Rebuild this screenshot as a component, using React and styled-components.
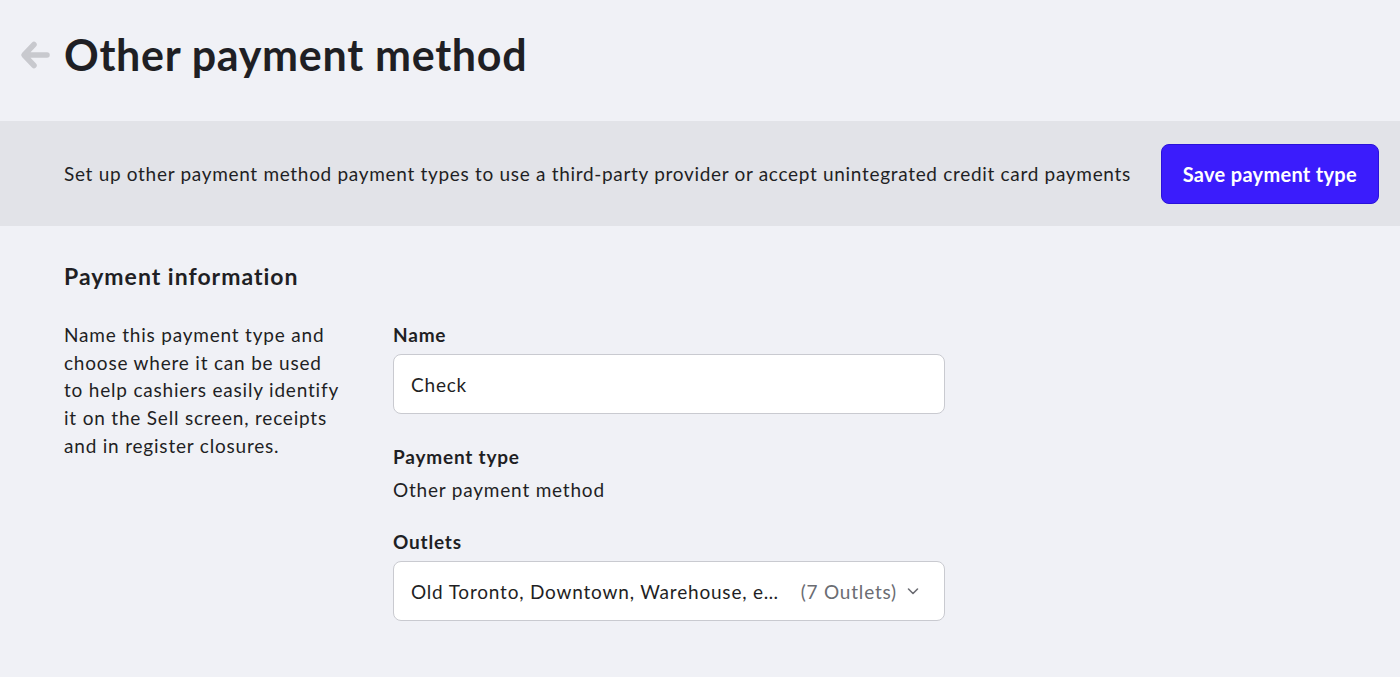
import React from "react";
import styled, { createGlobalStyle } from "styled-components";

const GlobalStyle = createGlobalStyle`
  body {
    margin: 0;
    background-color: #f0f1f6;
    font-family: Lato, "Open Sans", sans-serif;
    color: #1f1f24;
  }
`;

const Page = styled.div`
  width: 1400px;
  min-height: 677px;
  background-color: #f0f1f6;
`;

const Header = styled.div`
  display: flex;
  align-items: center;
  height: 121px;
  padding: 0 0 12px 18px;
  box-sizing: border-box;
`;

const BackButton = styled.button`
  display: flex;
  align-items: center;
  justify-content: center;
  width: 34px;
  height: 40px;
  margin-right: 12px;
  padding: 0;
  border: none;
  background: none;
  color: #c8c9ce;
  cursor: pointer;
`;

const Title = styled.h1`
  margin: 0;
  font-size: 43px;
  font-weight: 700;
  letter-spacing: 0.7px;
  color: #1f1f24;
`;

const Banner = styled.div`
  display: flex;
  align-items: center;
  justify-content: space-between;
  height: 105px;
  padding: 0 21px 0 64px;
  background-color: #e2e3e8;
`;

const BannerText = styled.p`
  margin: 0;
  font-size: 19px;
  letter-spacing: 0.69px;
  color: #1f1f24;
`;

const PrimaryButton = styled.button`
  height: 60px;
  padding: 0 21px;
  border: 1px solid #2a12d9;
  border-radius: 8px;
  background-color: #3b1cfc;
  color: #ffffff;
  font-family: inherit;
  font-size: 20px;
  font-weight: 700;
  letter-spacing: 0.3px;
  cursor: pointer;
`;

const Section = styled.section`
  padding: 36px 64px 0;
`;

const SectionTitle = styled.h2`
  margin: 0 0 31px;
  font-size: 23px;
  font-weight: 700;
  letter-spacing: 1px;
`;

const SectionBody = styled.div`
  display: grid;
  grid-template-columns: 329px 552px;
`;

const Description = styled.p`
  margin: 0;
  width: 280px;
  font-size: 19px;
  letter-spacing: 0.8px;
  line-height: 27.7px;
`;

const Fields = styled.div`
  display: flex;
  flex-direction: column;
`;

const Field = styled.div`
  display: flex;
  flex-direction: column;
  margin-bottom: ${(p) => p.$gap || "29px"};
`;

const Label = styled.label`
  font-size: 19px;
  font-weight: 700;
  letter-spacing: 0.8px;
  line-height: 27px;
  margin-bottom: 6px;
`;

const Value = styled.div`
  font-size: 19px;
  letter-spacing: 0.8px;
  line-height: 27px;
`;

const TextInput = styled.input`
  box-sizing: border-box;
  width: 552px;
  height: 60px;
  padding: 0 17px;
  border: 1px solid #c9cad0;
  border-radius: 8px;
  background: #ffffff;
  font-family: inherit;
  font-size: 19px;
  letter-spacing: 0.8px;
  color: #1f1f24;
  outline: none;
`;

const Select = styled.div`
  box-sizing: border-box;
  display: flex;
  align-items: center;
  width: 552px;
  height: 60px;
  padding: 0 24px 0 17px;
  border: 1px solid #c9cad0;
  border-radius: 8px;
  background: #ffffff;
  font-size: 19px;
  letter-spacing: 0.8px;
`;

const SelectText = styled.span`
  flex: 1;
  min-width: 0;
  overflow: hidden;
  white-space: nowrap;
  text-overflow: ellipsis;
`;

const SelectCount = styled.span`
  flex-shrink: 0;
  margin-left: 20px;
  color: #6b6c72;
`;

const Chevron = styled.span`
  display: flex;
  flex-shrink: 0;
  margin-left: 9px;
  color: #6b6c72;
`;

const App = () => {
  return (
    <>
      <GlobalStyle />
      <Page>
        <Header>
          <BackButton aria-label="Back">
            <svg width="30" height="32" viewBox="0 0 30 32" fill="none">
              <path
                d="M27 16H5M14 5.5L4 16l10 10.5"
                stroke="currentColor"
                strokeWidth="5.5"
                strokeLinecap="round"
                strokeLinejoin="round"
              />
            </svg>
          </BackButton>
          <Title>Other payment method</Title>
        </Header>

        <Banner>
          <BannerText>
            Set up other payment method payment types to use a third-party
            provider or accept unintegrated credit card payments
          </BannerText>
          <PrimaryButton>Save payment type</PrimaryButton>
        </Banner>

        <Section>
          <SectionTitle>Payment information</SectionTitle>
          <SectionBody>
            <Description>
              Name this payment type and choose where it can be used to help
              cashiers easily identify it on the Sell screen, receipts and in
              register closures.
            </Description>
            <Fields>
              <Field>
                <Label>Name</Label>
                <TextInput defaultValue="Check" />
              </Field>
              <Field $gap="25px">
                <Label>Payment type</Label>
                <Value>Other payment method</Value>
              </Field>
              <Field>
                <Label>Outlets</Label>
                <Select>
                  <SelectText>
                    Old Toronto, Downtown, Warehouse, east side, Uptown
                  </SelectText>
                  <SelectCount>(7 Outlets)</SelectCount>
                  <Chevron>
                    <svg width="14" height="14" viewBox="0 0 14 14" fill="none">
                      <path
                        d="M2.5 5l4.5 4.5L11.5 5"
                        stroke="currentColor"
                        strokeWidth="1.6"
                        strokeLinecap="round"
                        strokeLinejoin="round"
                      />
                    </svg>
                  </Chevron>
                </Select>
              </Field>
            </Fields>
          </SectionBody>
        </Section>
      </Page>
    </>
  );
};

export default App;
